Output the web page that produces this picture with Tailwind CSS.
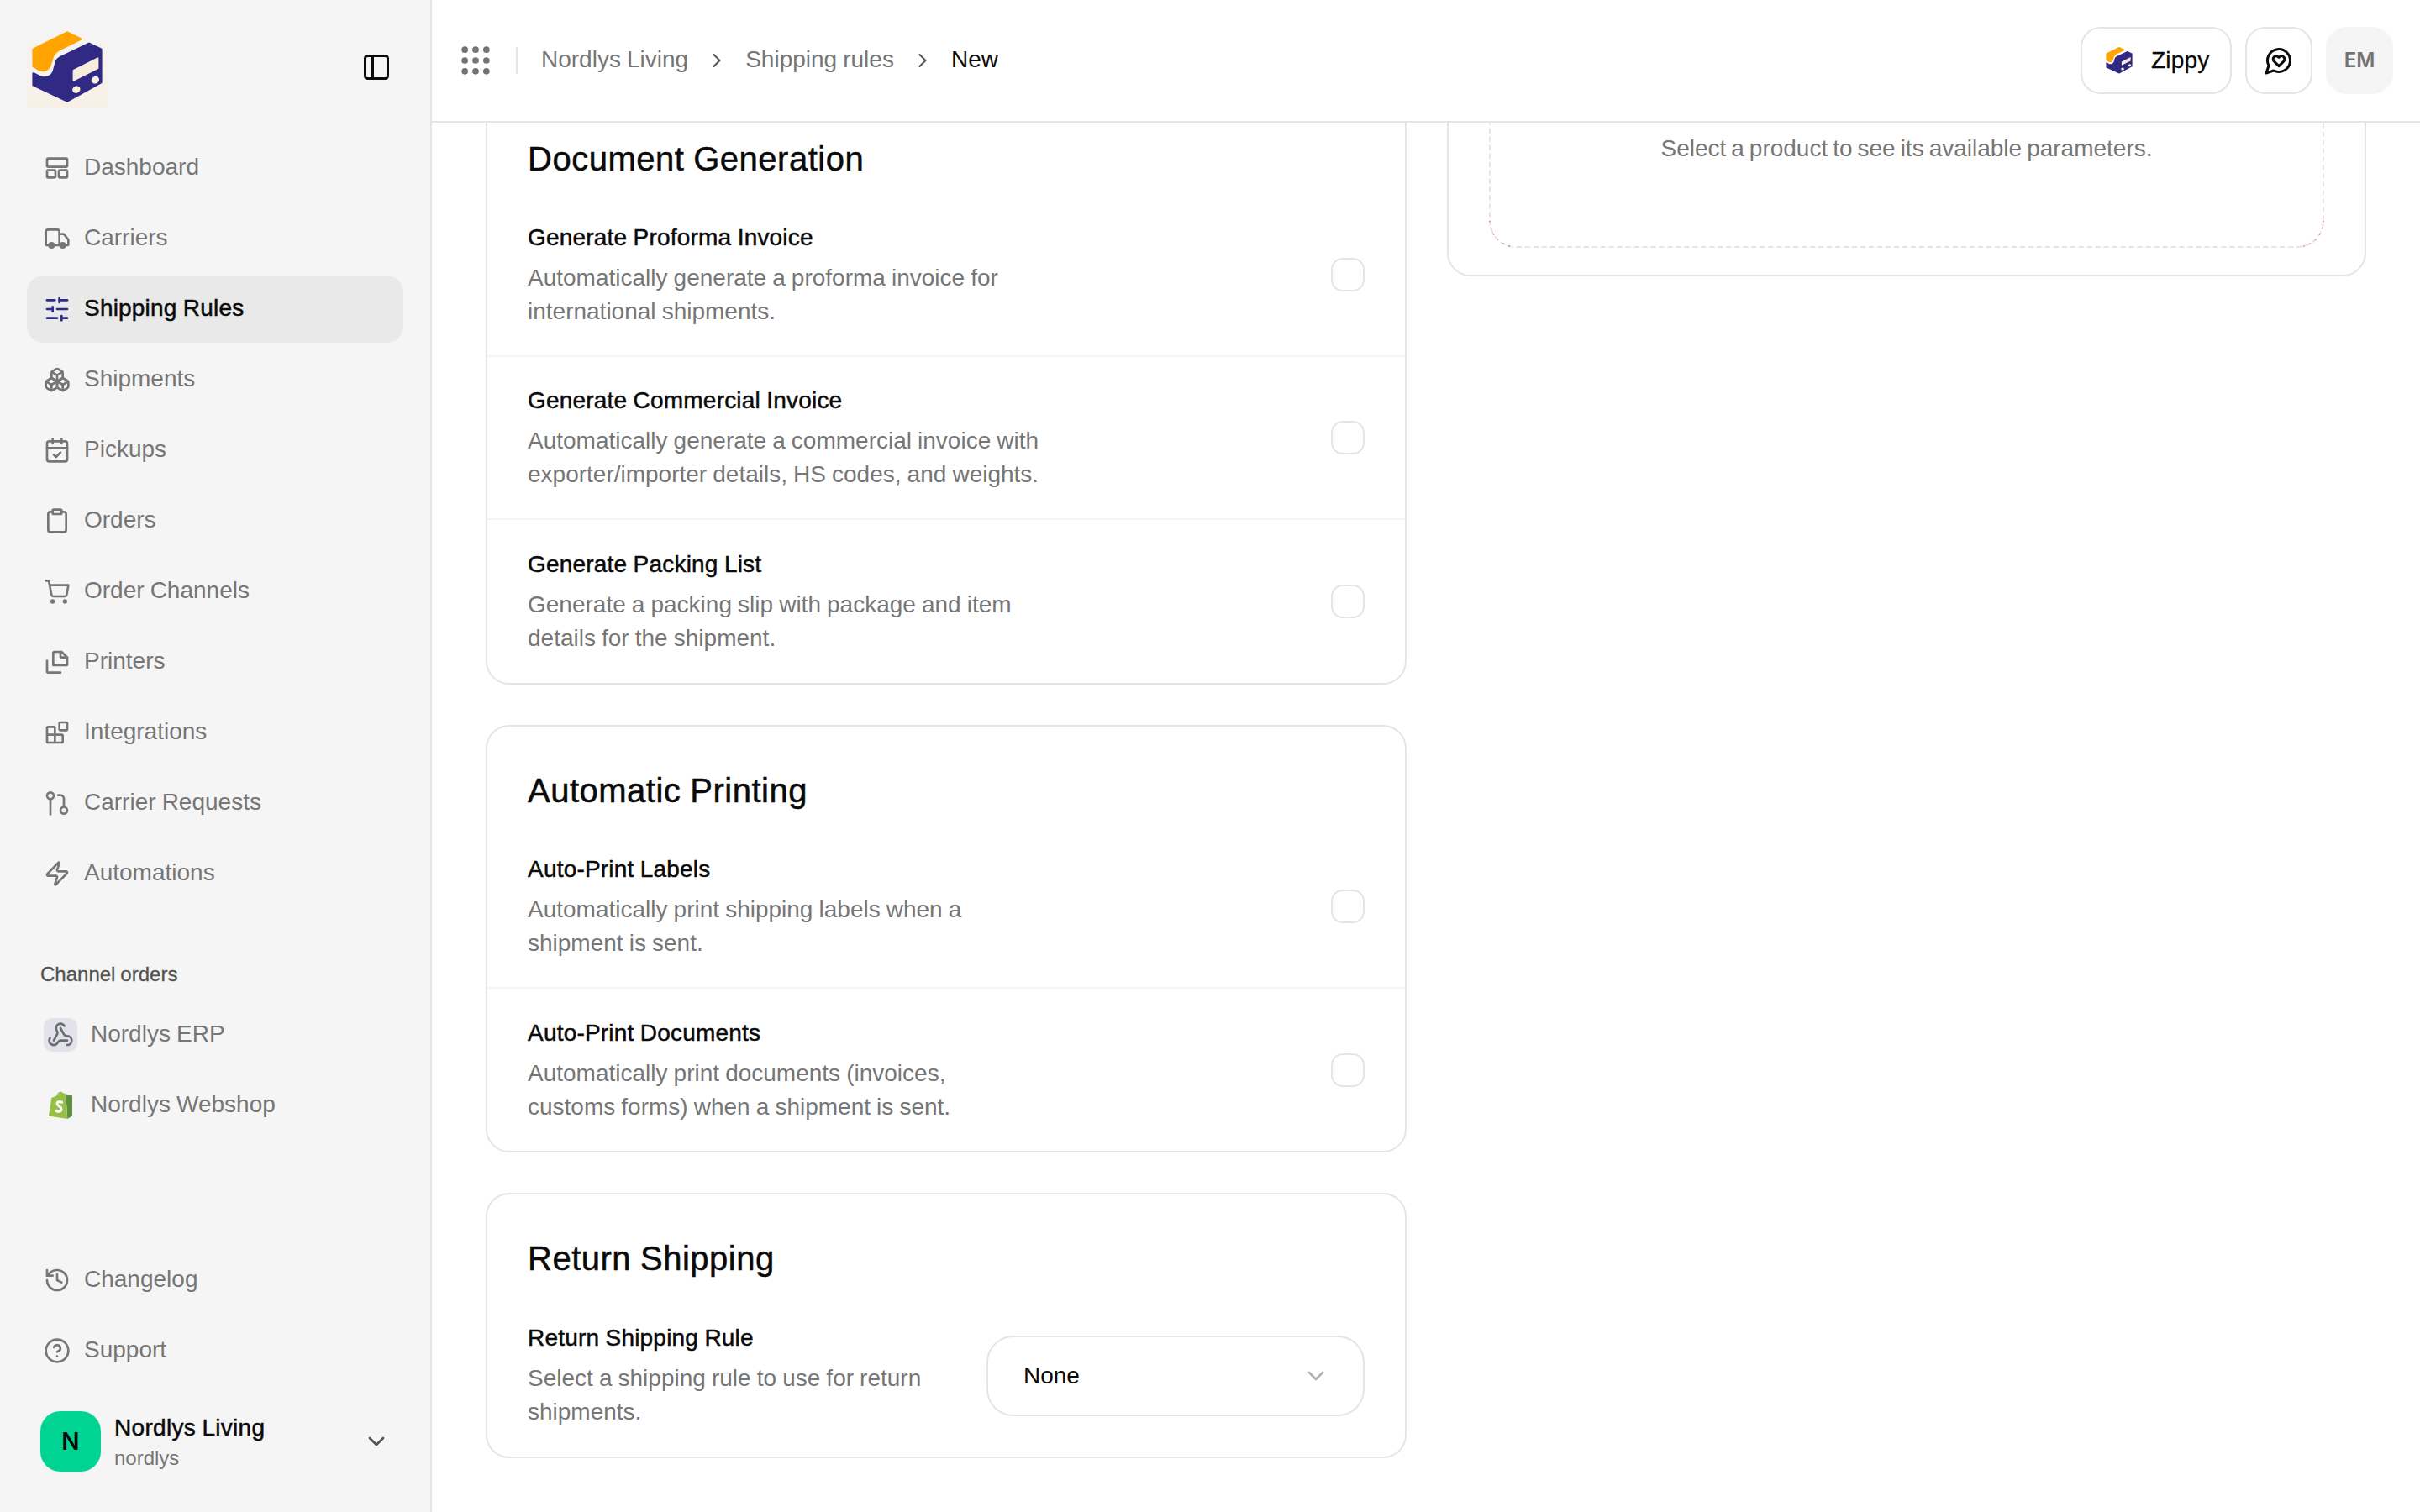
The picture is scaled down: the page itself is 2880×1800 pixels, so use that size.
<!DOCTYPE html>
<html lang="en">
<head>
<meta charset="utf-8">
<title>Shipping rules - New</title>
<script src="https://cdn.jsdelivr.net/npm/@tailwindcss/browser@4"></script>
</head>
<body class="bg-white">
<div class="[zoom:2] w-[1440px] h-[900px] flex overflow-hidden bg-white text-sm text-[#0a0a0a] [word-spacing:-0.35px] font-['Liberation_Sans',sans-serif]">

  <!-- sidebar -->
  <aside class="w-[257px] h-full shrink-0 flex flex-col bg-[#f5f5f5] border-r border-[#e5e5e5]">
    <div class="h-20 shrink-0 flex items-center justify-between pl-4 pr-[23px]">
      <div class="w-12 h-12 bg-linear-to-b from-[#f5f5f5] to-[#f7f0e6]">
        <svg viewBox="0 0 48 48" class="w-12 h-12">
          <path fill="#ffa400" stroke="#ffa400" stroke-width="1.4" stroke-linejoin="round" d="M24 3.4 32 7.3 19 13.6C16.8 14.8 15.8 16 15 18.5 14 22.5 13.6 24 11.5 25.4 10.3 26.1 9 26.2 7.500 25.500L3.900 23.400V13.400Z"/>
          <path fill="#312a85" stroke="#312a85" stroke-width="1.4" stroke-linejoin="round" d="M37 10 44.100 13.400V33L24 44.100 3.900 34.600V27.800L8 29.900C11 31 14.500 30 16 26.500L17.300 21.500C17.700 20 18.400 19 19.800 18.200Z"/>
          <path fill="#f8ecdc" stroke="#f8ecdc" stroke-linejoin="round" d="M27.800 26 42.200 18.700V24.600L27.800 31.800Z"/>
          <ellipse cx="29.400" cy="37.300" rx="2.400" ry="2.100" fill="#f8ecdc" transform="rotate(-28 29.400 37.300)"/>
          <ellipse cx="40.700" cy="31.600" rx="2.400" ry="2.100" fill="#f8ecdc" transform="rotate(-28 40.700 31.600)"/>
        </svg>
      </div>
      <svg viewBox="0 0 24 24" class="w-[18px] h-[18px]" fill="none" stroke="#0a0a0a" stroke-width="2" stroke-linecap="round" stroke-linejoin="round"><rect x="3" y="3" width="18" height="18" rx="2"/><path d="M9 3v18"/></svg>
    </div>

    <nav class="px-4 flex flex-col gap-[2px] text-[#767676] [&_a>span:last-child]:-mt-px">
      <a class="h-10 flex items-center gap-2 px-2.5 rounded-[10px]">
        <svg viewBox="0 0 24 24" class="w-4 h-4 shrink-0" fill="none" stroke="currentColor" stroke-width="2" stroke-linecap="round" stroke-linejoin="round"><rect x="3" y="3.500" width="18" height="7.500" rx="1"/><rect x="3" y="14" width="7.500" height="6.500" rx="1"/><rect x="13.500" y="14" width="7.500" height="6.500" rx="1"/></svg>
        <span>Dashboard</span>
      </a>
      <a class="h-10 flex items-center gap-2 px-2.5 rounded-[10px]">
        <svg viewBox="0 0 24 24" class="w-4 h-4 shrink-0" fill="none" stroke="currentColor" stroke-width="2" stroke-linecap="round" stroke-linejoin="round"><path d="M14 18V6a2 2 0 0 0-2-2H4a2 2 0 0 0-2 2v11a1 1 0 0 0 1 1h2"/><path d="M15 18H9"/><path d="M19 18h2a1 1 0 0 0 1-1v-3.650a1 1 0 0 0-.22-.624l-3.480-4.350A1 1 0 0 0 17.520 8H14"/><circle cx="17" cy="18" r="2" fill="currentColor"/><circle cx="7" cy="18" r="2" fill="currentColor"/></svg>
        <span>Carriers</span>
      </a>
      <a class="h-10 flex items-center gap-2 px-2.5 rounded-[10px] bg-[#e9e9e9] text-[#0a0a0a] tracking-[0.1px] [-webkit-text-stroke:0.25px_currentColor]">
        <svg viewBox="0 0 24 24" class="w-4 h-4 shrink-0" fill="none" stroke="#2e2a86" stroke-width="2" stroke-linecap="round" stroke-linejoin="round"><path d="M21 4h-7"/><path d="M10 4H3"/><path d="M21 12h-9"/><path d="M8 12H3"/><path d="M21 20h-5"/><path d="M12 20H3"/><path d="M14 2v4"/><path d="M8 10v4"/><path d="M16 18v4"/></svg>
        <span>Shipping Rules</span>
      </a>
      <a class="h-10 flex items-center gap-2 px-2.5 rounded-[10px]">
        <svg viewBox="0 0 24 24" class="w-4 h-4 shrink-0" fill="none" stroke="currentColor" stroke-width="2" stroke-linecap="round" stroke-linejoin="round"><path d="M2.970 12.920A2 2 0 0 0 2 14.630v3.240a2 2 0 0 0 .97 1.710l3 1.800a2 2 0 0 0 2.060 0L12 19v-5.500l-5-3-4.030 2.420Z"/><path d="m7 16.500-4.740-2.850"/><path d="m7 16.500 5-3"/><path d="M7 16.500v5.170"/><path d="M12 13.500V19l3.970 2.380a2 2 0 0 0 2.060 0l3-1.800a2 2 0 0 0 .97-1.710v-3.240a2 2 0 0 0-.97-1.710L17 10.500l-5 3Z"/><path d="m17 16.500-5-3"/><path d="m17 16.500 4.740-2.850"/><path d="M17 16.500v5.170"/><path d="M7.970 4.420A2 2 0 0 0 7 6.130v4.370l5 3 5-3V6.130a2 2 0 0 0-.97-1.710l-3-1.800a2 2 0 0 0-2.060 0l-3 1.800Z"/><path d="M12 8 7.260 5.150"/><path d="m12 8 4.740-2.850"/><path d="M12 13.500V8"/></svg>
        <span>Shipments</span>
      </a>
      <a class="h-10 flex items-center gap-2 px-2.5 rounded-[10px]">
        <svg viewBox="0 0 24 24" class="w-4 h-4 shrink-0" fill="none" stroke="currentColor" stroke-width="2" stroke-linecap="round" stroke-linejoin="round"><path d="M8 2v4"/><path d="M16 2v4"/><rect x="3" y="4" width="18" height="18" rx="2"/><path d="M3 10h18"/><path d="m9 16 2 2 4-4"/></svg>
        <span>Pickups</span>
      </a>
      <a class="h-10 flex items-center gap-2 px-2.5 rounded-[10px]">
        <svg viewBox="0 0 24 24" class="w-4 h-4 shrink-0" fill="none" stroke="currentColor" stroke-width="2" stroke-linecap="round" stroke-linejoin="round"><rect x="8" y="2" width="8" height="4" rx="1"/><path d="M16 4h2a2 2 0 0 1 2 2v14a2 2 0 0 1-2 2H6a2 2 0 0 1-2-2V6a2 2 0 0 1 2-2h2"/></svg>
        <span>Orders</span>
      </a>
      <a class="h-10 flex items-center gap-2 px-2.5 rounded-[10px]">
        <svg viewBox="0 0 24 24" class="w-4 h-4 shrink-0" fill="none" stroke="currentColor" stroke-width="2" stroke-linecap="round" stroke-linejoin="round"><circle cx="8" cy="21" r="1" fill="currentColor"/><circle cx="19" cy="21" r="1" fill="currentColor"/><path d="M2 2.500h2.500L7 15a2 2 0 0 0 2 1.500h9.500a2 2 0 0 0 2-1.500L22 6.500H5.200"/></svg>
        <span>Order Channels</span>
      </a>
      <a class="h-10 flex items-center gap-2 px-2.5 rounded-[10px]">
        <svg viewBox="0 0 24 24" class="w-4 h-4 shrink-0" fill="none" stroke="currentColor" stroke-width="2" stroke-linecap="round" stroke-linejoin="round"><path d="M8.500 15V4a1 1 0 0 1 1-1H16l5 5v6a1 1 0 0 1-1 1Z"/><path d="M15 3v4a1 1 0 0 0 1 1h5"/><path d="M3 11v9.500a1 1 0 0 0 1 1h11"/></svg>
        <span>Printers</span>
      </a>
      <a class="h-10 flex items-center gap-2 px-2.5 rounded-[10px]">
        <svg viewBox="0 0 24 24" class="w-4 h-4 shrink-0" fill="none" stroke="currentColor" stroke-width="2" stroke-linecap="round" stroke-linejoin="round"><rect x="14" y="3" width="7" height="7" rx="1"/><path d="M10 21V8a1 1 0 0 0-1-1H4a1 1 0 0 0-1 1v12a1 1 0 0 0 1 1h12a1 1 0 0 0 1-1v-5a1 1 0 0 0-1-1H3"/></svg>
        <span>Integrations</span>
      </a>
      <a class="h-10 flex items-center gap-2 px-2.5 rounded-[10px]">
        <svg viewBox="0 0 24 24" class="w-4 h-4 shrink-0" fill="none" stroke="currentColor" stroke-width="2" stroke-linecap="round" stroke-linejoin="round"><circle cx="6" cy="5.500" r="3"/><path d="M6 8.500V22"/><circle cx="18" cy="18.500" r="3"/><path d="M18 15.500V8a3 3 0 0 0-3-3h-2"/></svg>
        <span>Carrier Requests</span>
      </a>
      <a class="h-10 flex items-center gap-2 px-2.5 rounded-[10px]">
        <svg viewBox="0 0 24 24" class="w-4 h-4 shrink-0" fill="none" stroke="currentColor" stroke-width="2" stroke-linecap="round" stroke-linejoin="round"><path d="M4 14a1 1 0 0 1-.78-1.630l9.900-10.200a.5.5 0 0 1 .86.46l-1.920 6.020A1 1 0 0 0 13 10h7a1 1 0 0 1 .78 1.630l-9.900 10.200a.5.5 0 0 1-.86-.46l1.920-6.020A1 1 0 0 0 11 14z"/></svg>
        <span>Automations</span>
      </a>
    </nav>

    <div class="mt-8 px-4 text-[#767676] [&_a>span:last-child]:-mt-px">
      <p class="pl-2 mb-2 text-xs leading-4 text-[#525252] [-webkit-text-stroke:0.15px_currentColor]">Channel orders</p>
      <div class="flex flex-col gap-[2px]">
        <a class="h-10 flex items-center gap-2 px-2.5">
          <span class="w-5 h-5 rounded-[5px] bg-[#e1e2ea] flex items-center justify-center">
            <svg viewBox="0 0 24 24" class="w-4 h-4" fill="none" stroke="#6b6b73" stroke-width="2" stroke-linecap="round" stroke-linejoin="round"><path d="M18 16.980h-5.990c-1.100 0-1.950.94-2.480 1.900A4 4 0 0 1 2 17c.01-.7.2-1.400.57-2"/><path d="m6 17 3.130-5.780c.53-.97.1-2.180-.5-3.100a4 4 0 1 1 6.890-4.060"/><path d="m12 6 3.130 5.730C15.660 12.700 16.900 13 18 13a4 4 0 0 1 0 8"/></svg>
          </span>
          <span>Nordlys ERP</span>
        </a>
        <a class="h-10 flex items-center gap-2 px-2.5">
          <span class="w-5 h-5 flex items-center justify-center">
            <svg viewBox="0 0 20 20" class="w-5 h-5">
              <path fill="#95bf47" d="M3 16.300 4.700 5.400C5.800 5 6.900 4.700 7.400 4.500 8 2.900 9 1.900 10.200 1.900c.6 0 1.100.3 1.500.8l1 .1 1.500 15.200L3 16.300Z"/>
              <path fill="#5e8e3e" d="M13.100 2.900 14.200 3.900 17 4.100 17 16.300 14.200 18Z"/>
              <path fill="none" stroke="#fff" stroke-width="1.500" stroke-linecap="round" d="M10.800 8.100C9.700 7.500 8 7.800 8 9c0 1.300 2.500 1.500 2.500 3.200 0 1.400-1.700 1.900-3.200 1"/>
            </svg>
          </span>
          <span>Nordlys Webshop</span>
        </a>
      </div>
    </div>

    <div class="mt-auto px-4 flex flex-col gap-[2px] text-[#767676] [&_a>span:last-child]:-mt-px">
      <a class="h-10 flex items-center gap-2 px-2.5">
        <svg viewBox="0 0 24 24" class="w-4 h-4 shrink-0" fill="none" stroke="currentColor" stroke-width="2" stroke-linecap="round" stroke-linejoin="round"><path d="M3 12a9 9 0 1 0 9-9 9.750 9.750 0 0 0-6.740 2.740L3 8"/><path d="M3 3v5h5"/><path d="M12 7v5l4 2"/></svg>
        <span>Changelog</span>
      </a>
      <a class="h-10 flex items-center gap-2 px-2.5">
        <svg viewBox="0 0 24 24" class="w-4 h-4 shrink-0" fill="none" stroke="currentColor" stroke-width="2" stroke-linecap="round" stroke-linejoin="round"><circle cx="12" cy="12" r="10"/><path d="M9.090 9a3 3 0 0 1 5.830 1c0 2-3 3-3 3"/><path d="M12 17h.01"/></svg>
        <span>Support</span>
      </a>
    </div>

    <div class="mt-4 mb-6 px-6 flex items-center">
      <div class="w-9 h-9 rounded-xl bg-[#00d492] flex items-center justify-center font-['Inter',sans-serif] font-semibold text-sm">N</div>
      <div class="ml-2 flex-1 min-w-0">
        <p class="leading-5 tracking-[0.15px] [-webkit-text-stroke:0.25px_currentColor]">Nordlys Living</p>
        <p class="text-xs leading-4 text-[#767676]">nordlys</p>
      </div>
      <svg viewBox="0 0 24 24" class="w-4 h-4" fill="none" stroke="#525252" stroke-width="2" stroke-linecap="round" stroke-linejoin="round"><path d="m6 9 6 6 6-6"/></svg>
    </div>
  </aside>

  <div class="flex-1 min-w-0 h-full flex flex-col">
    <!-- top bar -->
    <header class="relative z-10 h-[73px] shrink-0 flex items-center justify-between bg-white border-b border-[#e5e5e5] pl-[15px] pr-4">
      <div class="flex items-center">
        <svg viewBox="0 0 24 24" class="w-[22px] h-[22px]" fill="#737373"><circle cx="5" cy="5" r="2.100"/><circle cx="12" cy="5" r="2.100"/><circle cx="19" cy="5" r="2.100"/><circle cx="5" cy="12" r="2.100"/><circle cx="12" cy="12" r="2.100"/><circle cx="19" cy="12" r="2.100"/><circle cx="5" cy="19" r="2.100"/><circle cx="19" cy="19" r="2.100"/><circle cx="12" cy="19" r="2.100"/></svg>
        <span class="ml-[13px] w-px h-4 bg-[#e5e5e5]"></span>
        <span class="ml-[14px] -mt-px text-[#767676]">Nordlys Living</span>
        <svg viewBox="0 0 24 24" class="mx-2.5 w-3.5 h-3.5" fill="none" stroke="#525252" stroke-width="1.750" stroke-linecap="round" stroke-linejoin="round"><path d="m9 18 6-6-6-6"/></svg>
        <span class="-mt-px text-[#767676]">Shipping rules</span>
        <svg viewBox="0 0 24 24" class="mx-2.5 w-3.5 h-3.5" fill="none" stroke="#525252" stroke-width="1.750" stroke-linecap="round" stroke-linejoin="round"><path d="m9 18 6-6-6-6"/></svg>
        <span class="-mt-px">New</span>
      </div>
      <div class="flex items-center gap-2">
        <button class="h-10 w-[90px] flex items-center gap-[10px] pl-[14px] rounded-xl border border-[#e5e5e5] bg-white">
          <svg viewBox="0 0 48 48" class="w-[18px] h-[18px] shrink-0 -ml-px">
            <path fill="#ffa400" stroke="#ffa400" stroke-width="1.400" stroke-linejoin="round" d="M24 3.400 32 7.300 19 13.600C16.800 14.800 15.800 16 15 18.500 14 22.500 13.600 24 11.500 25.400 10.300 26.100 9 26.200 7.500 25.500L3.900 23.400V13.400Z"/>
            <path fill="#312a85" stroke="#312a85" stroke-width="1.400" stroke-linejoin="round" d="M37 10 44.100 13.400V33L24 44.100 3.900 34.600V27.800L8 29.900C11 31 14.500 30 16 26.500L17.300 21.500C17.700 20 18.400 19 19.800 18.200Z"/>
            <path fill="#f8ecdc" d="M27.800 26 42.200 18.700V24.600L27.800 31.800Z"/>
            <ellipse cx="29.400" cy="37.300" rx="2.400" ry="2.100" fill="#f8ecdc"/>
            <ellipse cx="40.700" cy="31.600" rx="2.400" ry="2.100" fill="#f8ecdc"/>
          </svg>
          <span class="tracking-[0.1px] [-webkit-text-stroke:0.15px_currentColor]">Zippy</span>
        </button>
        <button class="w-10 h-10 flex items-center justify-center rounded-xl border border-[#e5e5e5] bg-white">
          <svg viewBox="0 0 24 24" class="w-[18px] h-[18px]" fill="none" stroke="#0a0a0a" stroke-width="2" stroke-linecap="round" stroke-linejoin="round"><path d="M7.900 20A9 9 0 1 0 4 16.100L2 22Z"/><path d="M15.800 9.200a2.500 2.500 0 0 0-3.500 0l-.3.4-.35-.3a2.420 2.420 0 1 0-3.200 3.600l3.600 3.500 3.600-3.500c1.200-1.200 1.100-2.700.2-3.700"/></svg>
        </button>
        <div class="w-10 h-10 flex items-center justify-center rounded-xl bg-[#f5f5f5] text-[#737373] font-['Inter',sans-serif] font-semibold text-xs">EM</div>
      </div>
    </header>

    <!-- content, scrolled part way down -->
    <main class="flex-1 min-h-0 overflow-hidden px-8">
      <div class="-mt-[16.500px] grid grid-cols-[548px_547px] gap-6 items-start">

        <div class="flex flex-col gap-6">
          <section class="border border-[#e5e5e5] rounded-[14px] bg-white">
            <h2 class="px-6 pt-[23px] pb-[7px] text-xl leading-7 tracking-[0.25px] [-webkit-text-stroke:0.25px_currentColor]">Document Generation</h2>
            <div class="flex flex-col divide-y divide-[#f5f5f5]">
              <div class="h-[97px] flex items-center justify-between px-6 py-4">
                <div>
                  <p class="leading-5 tracking-[0.1px] [-webkit-text-stroke:0.25px_currentColor]">Generate Proforma Invoice</p>
                  <p class="mt-1 leading-5 text-[#767676]">Automatically generate a proforma invoice for<br>international shipments.</p>
                </div>
                <span class="w-5 h-5 rounded-[7px] border border-[#e5e5e5] bg-white"></span>
              </div>
              <div class="h-[97px] flex items-center justify-between px-6 py-4">
                <div>
                  <p class="leading-5 tracking-[0.1px] [-webkit-text-stroke:0.25px_currentColor]">Generate Commercial Invoice</p>
                  <p class="mt-1 leading-5 text-[#767676]">Automatically generate a commercial invoice with<br>exporter/importer details, HS codes, and weights.</p>
                </div>
                <span class="w-5 h-5 rounded-[7px] border border-[#e5e5e5] bg-white"></span>
              </div>
              <div class="h-[97px] flex items-center justify-between px-6 py-4">
                <div>
                  <p class="leading-5 tracking-[0.1px] [-webkit-text-stroke:0.25px_currentColor]">Generate Packing List</p>
                  <p class="mt-1 leading-5 text-[#767676]">Generate a packing slip with package and item<br>details for the shipment.</p>
                </div>
                <span class="w-5 h-5 rounded-[7px] border border-[#e5e5e5] bg-white"></span>
              </div>
            </div>
          </section>

          <section class="border border-[#e5e5e5] rounded-[14px] bg-white">
            <h2 class="px-6 pt-6 pb-[7px] text-xl leading-7 tracking-[0.25px] [-webkit-text-stroke:0.25px_currentColor]">Automatic Printing</h2>
            <div class="flex flex-col divide-y divide-[#f5f5f5]">
              <div class="h-[97px] flex items-center justify-between px-6 py-4">
                <div>
                  <p class="leading-5 tracking-[0.1px] [-webkit-text-stroke:0.25px_currentColor]">Auto-Print Labels</p>
                  <p class="mt-1 leading-5 text-[#767676]">Automatically print shipping labels when a<br>shipment is sent.</p>
                </div>
                <span class="w-5 h-5 rounded-[7px] border border-[#e5e5e5] bg-white"></span>
              </div>
              <div class="h-[96.500px] flex items-center justify-between px-6 py-4">
                <div>
                  <p class="leading-5 tracking-[0.1px] [-webkit-text-stroke:0.25px_currentColor]">Auto-Print Documents</p>
                  <p class="mt-1 leading-5 text-[#767676]">Automatically print documents (invoices,<br>customs forms) when a shipment is sent.</p>
                </div>
                <span class="w-5 h-5 rounded-[7px] border border-[#e5e5e5] bg-white"></span>
              </div>
            </div>
          </section>

          <section class="border border-[#e5e5e5] rounded-[14px] bg-white">
            <h2 class="px-6 pt-6 pb-[7.500px] text-xl leading-7 tracking-[0.25px] [-webkit-text-stroke:0.25px_currentColor]">Return Shipping</h2>
            <div class="flex items-center justify-between px-6 pt-4 pb-[16.500px]">
              <div>
                <p class="leading-5 tracking-[0.1px] [-webkit-text-stroke:0.25px_currentColor]">Return Shipping Rule</p>
                <p class="mt-1 leading-5 text-[#767676]">Select a shipping rule to use for return<br>shipments.</p>
              </div>
              <button class="mt-px w-[225px] h-12 flex items-center justify-between pl-[21px] pr-[20px] rounded-2xl border border-[#e5e5e5] bg-white">
                <span>None</span>
                <svg viewBox="0 0 24 24" class="w-4 h-4" fill="none" stroke="#b0b0b0" stroke-width="2" stroke-linecap="round" stroke-linejoin="round"><path d="m6 9 6 6 6-6"/></svg>
              </button>
            </div>
          </section>
        </div>

        <section class="border border-[#e5e5e5] rounded-[14px] bg-white px-6 pb-4">
          <div class="relative pt-5 pb-12 border border-dashed border-[#e5e5e5] rounded-2xl text-center text-[#767676] leading-5 [word-spacing:-0.9px]">
            Select a product to see its available parameters.
            <svg viewBox="0 0 16 16" class="absolute -left-px -bottom-px w-4 h-4" fill="none" stroke="#f00" stroke-width=".5" stroke-dasharray=".7 3.300"><path d="M.5 0A15.500 15.500 0 0 0 15.500 15.500"/></svg>
            <svg viewBox="0 0 16 16" class="absolute -right-px -bottom-px w-4 h-4" fill="none" stroke="#f00" stroke-width=".5" stroke-dasharray=".7 3.300"><path d="M15.500 0A15.500 15.500 0 0 1 .5 15.500"/></svg>
          </div>
        </section>
      </div>
    </main>
  </div>
</div>
</body>
</html>
